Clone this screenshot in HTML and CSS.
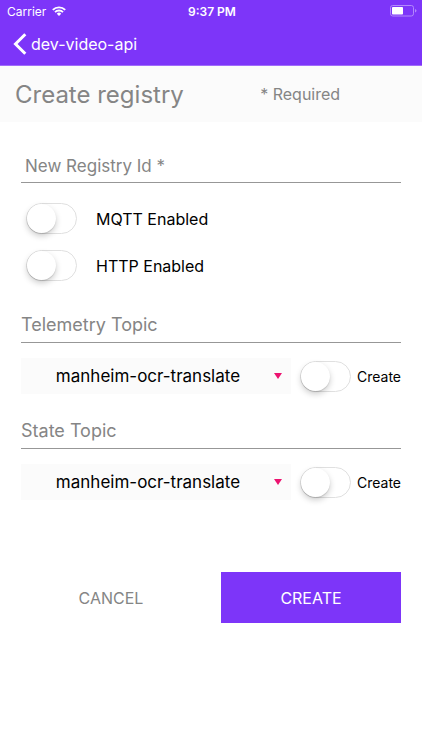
FILE: index.html
```html
<!DOCTYPE html>
<html lang="en">
  <head>
    <meta charset="utf-8">
    <meta name="viewport" content="width=device-width, initial-scale=1">
    <title>Create registry</title>
    <link rel="stylesheet" href="styles.css">
  </head>

  <body>
    <header class="app-bar">
      <div class="status-bar">
        <span class="carrier">
          Carrier
          <svg width="14" height="10" viewBox="0 0 14 10" fill="none" stroke="#fff" stroke-width="1.9">
            <path d="M0.8 3.9a8.8 8.8 0 0 1 12.4 0"/>
            <path d="M3 6.2a5.6 5.6 0 0 1 8 0"/>
            <path d="M7 9.9L4.8 7.7a3.1 3.1 0 0 1 4.4 0z" fill="#fff" stroke="none"/>
          </svg>
        </span>
        <span class="time">9:37 PM</span>
        <span class="battery">
          <svg width="27" height="12" viewBox="0 0 27 12">
            <rect x="0.5" y="0.5" width="23" height="10.5" rx="2.2" fill="none" stroke="#b389fb"/>
            <rect x="2" y="2" width="11" height="7.5" rx="0.8" fill="#fff"/>
            <path d="M25 4v3.600q1.500-.5 1.500-1.800t-1.500-1.800z" fill="#b389fb"/>
          </svg>
        </span>
      </div>
      <a class="back" href="#">
        <svg width="14" height="22" viewBox="0 0 14 22" fill="none" stroke="#fff" stroke-width="3">
          <path d="M12.300 1.200L2.500 11l9.800 9.800"/>
        </svg>
        dev-video-api
      </a>
    </header>

    <div class="title-bar">
      <h1>Create registry</h1>
      <span class="required">* Required</span>
    </div>

    <form class="registry-form">
      <input class="registry-id" type="text" placeholder="New Registry Id *" aria-label="New Registry Id">

      <label class="option">
        <input class="switch" type="checkbox">
        MQTT Enabled
      </label>
      <label class="option">
        <input class="switch" type="checkbox">
        HTTP Enabled
      </label>

      <section class="topic">
        <label class="topic-title" for="telemetry">Telemetry Topic</label>
        <div class="topic-row">
          <div class="picker">
            <select id="telemetry">
              <option>manheim-ocr-translate</option>
            </select>
          </div>
          <label class="create-topic">
            <input class="switch" type="checkbox">
            Create
          </label>
        </div>
      </section>

      <section class="topic">
        <label class="topic-title" for="state">State Topic</label>
        <div class="topic-row">
          <div class="picker">
            <select id="state">
              <option>manheim-ocr-translate</option>
            </select>
          </div>
          <label class="create-topic">
            <input class="switch" type="checkbox">
            Create
          </label>
        </div>
      </section>

      <div class="actions">
        <button class="btn" type="button">CANCEL</button>
        <button class="btn btn-primary" type="submit">CREATE</button>
      </div>
    </form>
  </body>
</html>
```
FILE: styles.css
```css
* {
  box-sizing: border-box;
}

body {
  margin: 0;
  background: #fff;
  color: #000;
  font-family: Inter, "Liberation Sans", sans-serif;
  font-size: 16px;
}

input, select, button {
  margin: 0;
  font-family: inherit;
}

/* top bar */
.app-bar {
  background: #7d35f9;
  color: #fff;
  border-bottom: 1px solid #a06cfa;
}

.status-bar {
  display: grid;
  grid-template-columns: 1fr auto 1fr;
  align-items: center;
  height: 22px;
  padding: 0 5px 0 7px;
  font-size: 12px;
}

.carrier {
  display: flex;
  align-items: center;
  gap: 6px;
}

.time {
  font-weight: 600;
}

.battery {
  display: flex;
  justify-content: flex-end;
}

.back {
  display: flex;
  align-items: center;
  gap: 4px;
  height: 43px;
  padding-left: 13px;
  color: #fff;
  font-size: 16px;
  text-decoration: none;
}

.title-bar {
  display: grid;
  grid-template-columns: 3fr 2fr;
  align-items: center;
  height: 56px;
  padding: 0 15px;
  background: #fbfbfb;
  color: #858585;
}

.title-bar h1 {
  margin: 0;
  font-size: 24px;
  font-weight: 400;
}

.required {
  padding-left: 10px;
}

/* form */
.registry-form {
  padding: 28px 21px;
}

.registry-id {
  display: block;
  width: 100%;
  height: 33px;
  margin-bottom: 12px;
  padding: 0 4px;
  border: 0;
  border-bottom: 1px solid #979797;
  border-radius: 0;
  outline: 0;
  background: none;
  font-size: 17px;
}

.registry-id::placeholder {
  color: #858585;
  opacity: 1;
}

.option {
  display: flex;
  align-items: center;
  gap: 19px;
  height: 47px;
  padding-left: 5px;
}

.switch {
  appearance: none;
  flex: none;
  display: flex;
  width: 51px;
  height: 31px;
  border: 1px solid #e0e0e0;
  border-radius: 16px;
  background: #fff;
}

.switch::before {
  content: "";
  width: 29px;
  height: 29px;
  border-radius: 50%;
  background: #fff;
  box-shadow: 0 3px 6px rgba(0, 0, 0, 0.2), 0 1px 1px rgba(0, 0, 0, 0.12);
}

.switch:checked {
  justify-content: flex-end;
  border-color: #7d35f9;
  background: #7d35f9;
}

.topic {
  margin-top: 19px;
}

.topic-title {
  display: block;
  height: 36px;
  border-bottom: 1px solid #979797;
  color: #858585;
  font-size: 18px;
  line-height: 36px;
}

.option + .topic {
  margin-top: 18px;
}

.topic-row {
  display: flex;
  gap: 9px;
  margin-top: 15px;
}

.picker {
  position: relative;
  flex: 1;
}

.picker::after {
  content: "";
  position: absolute;
  top: 15px;
  right: 9px;
  border: 4px solid transparent;
  border-top: 6px solid #ec1370;
  border-bottom: 0;
  pointer-events: none;
}

.picker select {
  appearance: none;
  display: block;
  width: 100%;
  height: 36px;
  padding: 0 16px 0 0;
  border: 0;
  border-radius: 0;
  background: #fbfbfb;
  color: #000;
  font-size: 17px;
  text-align: center;
  text-align-last: center;
}

.create-topic {
  display: flex;
  align-items: center;
  gap: 6px;
  font-size: 14px;
}

.actions {
  display: grid;
  grid-template-columns: 1fr 1fr;
  gap: 20px;
  margin-top: 72px;
}

.btn {
  height: 51px;
  padding: 0;
  border: 0;
  background: none;
  color: #858585;
  font-size: 16px;
}

.btn-primary {
  background: #7d35f9;
  color: #fff;
}
```
